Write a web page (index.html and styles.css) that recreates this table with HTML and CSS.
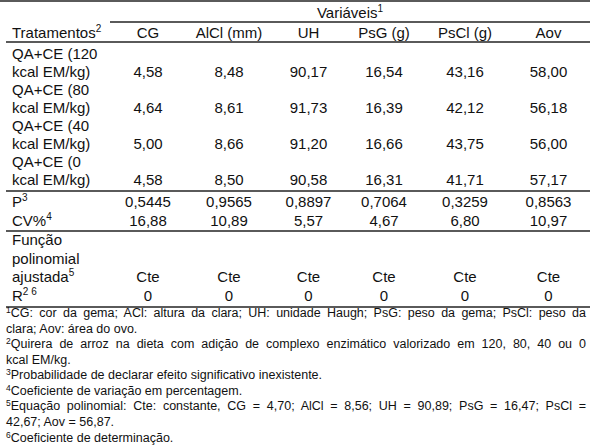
FILE: index.html
```html
<!DOCTYPE html>
<html lang="pt">
<head>
<meta charset="utf-8">
<title>Tabela</title>
<link rel="stylesheet" href="styles.css">
</head>
<body>
<div class="page">
  <div class="rule-top"></div>
  <div class="tbl">
    <div class="thead">
      <div class="th-trat">Tratamentos<sup>2</sup></div>
      <div class="vars">
        <div class="var-title">Variáveis<sup>1</sup></div>
        <div class="var-cols">
          <div class="c">CG</div>
          <div class="c">AlCl (mm)</div>
          <div class="c">UH</div>
          <div class="c">PsG (g)</div>
          <div class="c">PsCl (g)</div>
          <div class="c">Aov</div>
        </div>
      </div>
    </div>

    <div class="group treat">
      <div class="row">
        <div class="c1">QA+CE (120<br>kcal EM/kg)</div>
        <div class="c">4,58</div><div class="c">8,48</div><div class="c">90,17</div><div class="c">16,54</div><div class="c">43,16</div><div class="c">58,00</div>
      </div>
      <div class="row">
        <div class="c1">QA+CE (80<br>kcal EM/kg)</div>
        <div class="c">4,64</div><div class="c">8,61</div><div class="c">91,73</div><div class="c">16,39</div><div class="c">42,12</div><div class="c">56,18</div>
      </div>
      <div class="row">
        <div class="c1">QA+CE (40<br>kcal EM/kg)</div>
        <div class="c">5,00</div><div class="c">8,66</div><div class="c">91,20</div><div class="c">16,66</div><div class="c">43,75</div><div class="c">56,00</div>
      </div>
      <div class="row">
        <div class="c1">QA+CE (0<br>kcal EM/kg)</div>
        <div class="c">4,58</div><div class="c">8,50</div><div class="c">90,58</div><div class="c">16,31</div><div class="c">41,71</div><div class="c">57,17</div>
      </div>
    </div>

    <div class="group stats">
      <div class="row">
        <div class="c1">P<sup>3</sup></div>
        <div class="c">0,5445</div><div class="c">0,9565</div><div class="c">0,8897</div><div class="c">0,7064</div><div class="c">0,3259</div><div class="c">0,8563</div>
      </div>
      <div class="row">
        <div class="c1">CV%<sup>4</sup></div>
        <div class="c">16,88</div><div class="c">10,89</div><div class="c">5,57</div><div class="c">4,67</div><div class="c">6,80</div><div class="c">10,97</div>
      </div>
    </div>

    <div class="group fit">
      <div class="row first">
        <div class="c1">Função<br>polinomial<br>ajustada<sup>5</sup></div>
        <div class="c">Cte</div><div class="c">Cte</div><div class="c">Cte</div><div class="c">Cte</div><div class="c">Cte</div><div class="c">Cte</div>
      </div>
      <div class="row">
        <div class="c1">R<sup>2 6</sup></div>
        <div class="c">0</div><div class="c">0</div><div class="c">0</div><div class="c">0</div><div class="c">0</div><div class="c">0</div>
      </div>
    </div>
  </div>

  <div class="notes">
    <p><span class="jl"><sup>1</sup>CG: cor da gema; ACl: altura da clara; UH: unidade Haugh; PsG: peso da gema; PsCl: peso da</span>clara; Aov: área do ovo.</p>
    <p><span class="jl"><sup>2</sup>Quirera de arroz na dieta com adição de complexo enzimático valorizado em 120, 80, 40 ou 0</span>kcal EM/kg.</p>
    <p><sup>3</sup>Probabilidade de declarar efeito significativo inexistente.</p>
    <p><sup>4</sup>Coeficiente de variação em percentagem.</p>
    <p><span class="jl"><sup>5</sup>Equação polinomial: Cte: constante, CG = 4,70; AlCl = 8,56; UH = 90,89; PsG = 16,47; PsCl =</span>42,67; Aov = 56,87.</p>
    <p><sup>6</sup>Coeficiente de determinação.</p>
  </div>
</div>
</body>
</html>
```

FILE: styles.css
```css
* {
  box-sizing: border-box;
  margin: 0;
  padding: 0;
}

body {
  margin: 0;
  background: #ffffff;
  color: #111111;
  font-family: "Liberation Sans", Arial, sans-serif;
  font-size: 15px;
}

.page {
  width: 600px;
  height: 448px;
  overflow: hidden;
}

.rule-top {
  width: 590px;
  height: 2px;
  background: #5a5a5a;
}

.tbl {
  margin-left: 6px;
  width: 584px;
}

sup {
  font-size: 10px;
  line-height: 0;
  vertical-align: baseline;
  position: relative;
  top: -6px;
}

.thead {
  display: grid;
  grid-template-columns: 104px 480px;
  border-bottom: 2px solid #5a5a5a;
}

.th-trat {
  align-self: end;
  padding-left: 6px;
  line-height: 16px;
}

.var-title {
  padding-top: 2px;
  line-height: 17px;
  text-align: center;
  border-bottom: 2px solid #5a5a5a;
}

.var-cols {
  display: grid;
  grid-template-columns: 76px 86px 73px 78px 84px 83px;
  padding-top: 2px;
  line-height: 16px;
}

.row {
  display: grid;
  grid-template-columns: 104px 76px 86px 73px 78px 84px 83px;
  align-items: end;
}

.c {
  text-align: center;
}

.c1 {
  padding-left: 6px;
}

.group {
  border-bottom: 2px solid #5a5a5a;
}

.treat {
  padding-top: 1.5px;
  line-height: 18.14px;
}

.stats {
  line-height: 18.14px;
}

.stats .row {
  padding-top: 1.2px;
}

.fit {
  line-height: 18.7px;
}

.fit .first {
  margin-top: -1.3px;
}

.notes {
  margin-left: 6px;
  width: 580px;
  margin-top: -1.6px;
  font-size: 12.5px;
  line-height: 15.55px;
  text-align: justify;
}

.notes sup {
  font-size: 8.5px;
  top: -4px;
}

.jl {
  display: block;
  text-align: justify;
  text-align-last: justify;
}
```
